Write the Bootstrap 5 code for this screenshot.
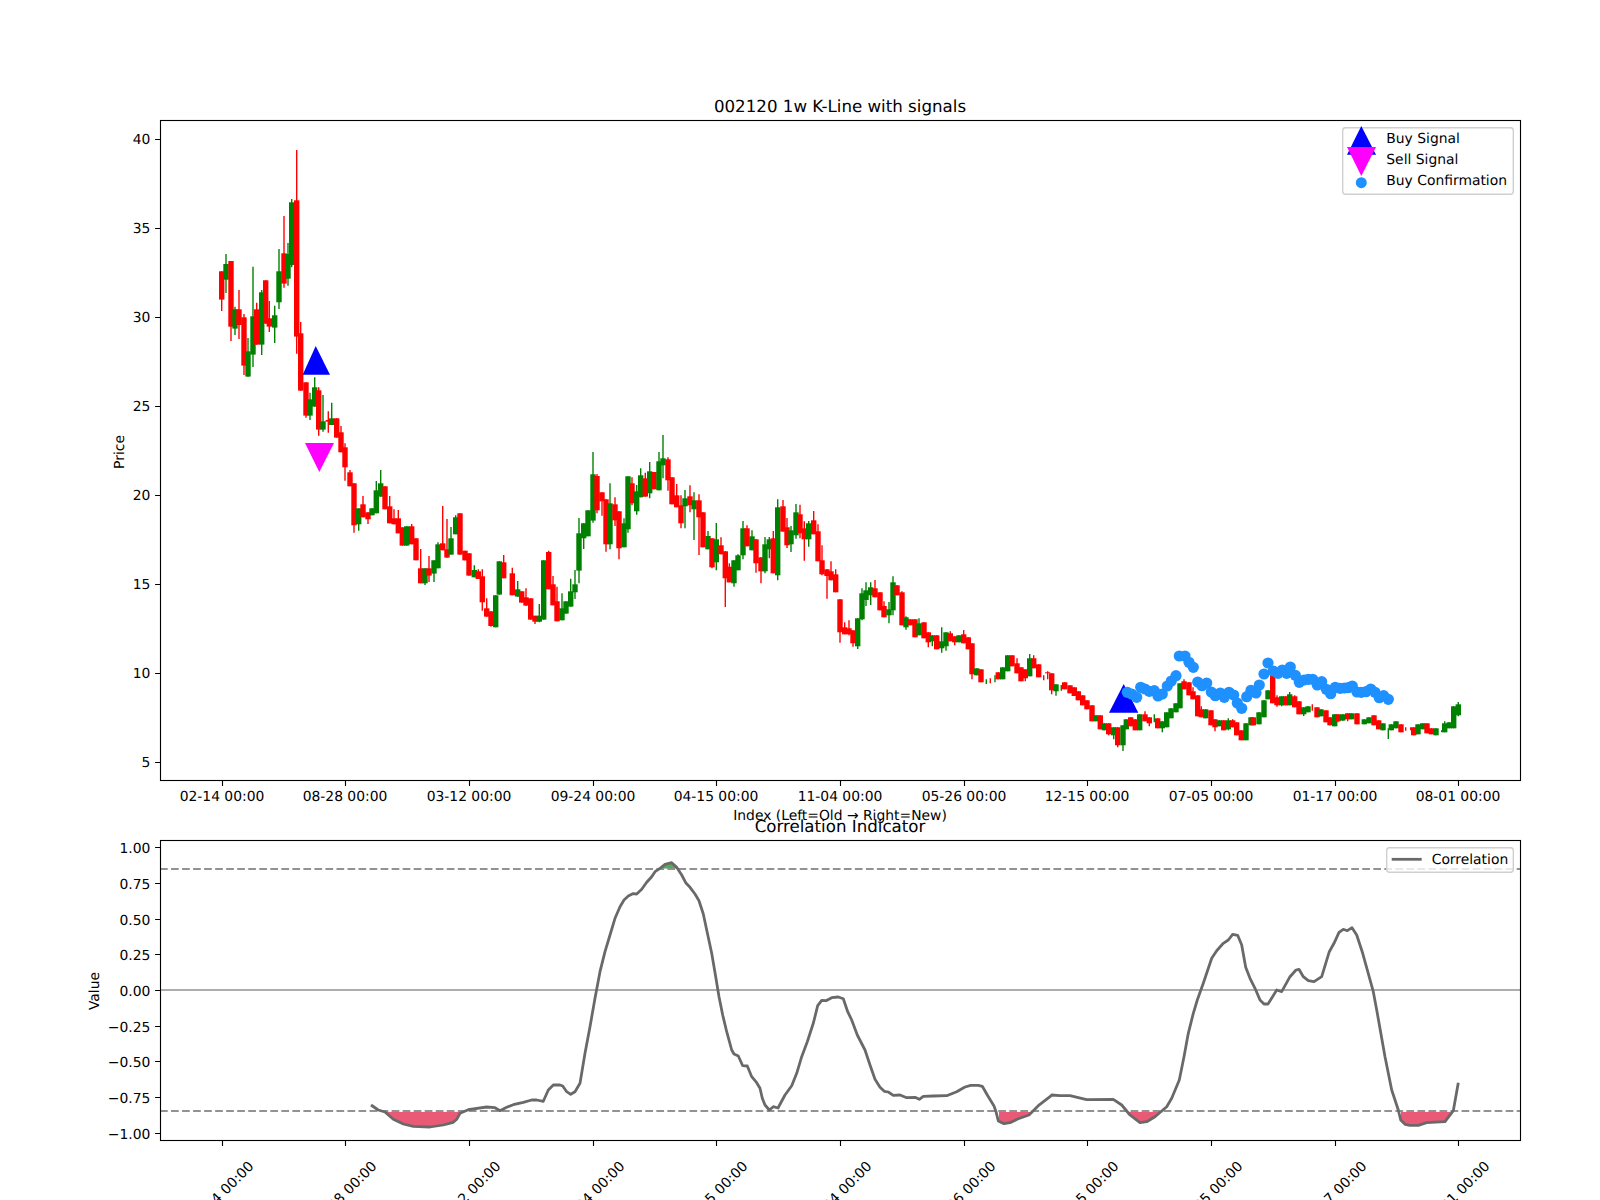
<!DOCTYPE html>
<html lang="en">
<head>
<meta charset="utf-8">
<title>002120 1w K-Line with signals</title>
<link href="https://cdn.jsdelivr.net/npm/bootstrap@5.3.0/dist/css/bootstrap.min.css" rel="stylesheet">
<style>
body { background: #fff; }
.chart-canvas { width: 1600px; height: 1200px; }
.chart-canvas text { font-family: "DejaVu Sans", sans-serif; font-size: 13.89px; fill: #000; text-rendering: geometricPrecision; }
.chart-canvas text.fig-title { font-size: 16.67px; text-anchor: middle; }
.chart-canvas text.tick-x, .chart-canvas text.axis-x { text-anchor: middle; }
.chart-canvas text.tick-y { text-anchor: end; }
.chart-canvas text.axis-y { text-anchor: middle; }
.spine { fill: none; stroke: #000; stroke-width: 1.11px; }
.ticks { fill: none; stroke: #000; stroke-width: 1.11px; }
.level-dash { stroke: #929292; stroke-width: 2.08px; stroke-dasharray: 7.7 3.33; }
.level-zero { stroke: #adadad; stroke-width: 2.08px; }
.corr-line { fill: none; stroke: #696969; stroke-width: 2.78px; stroke-linejoin: round; stroke-linecap: butt; }
.legend-box { fill: #fff; fill-opacity: .8; stroke: #d0d0d0; stroke-width: 1.39px; }
.fill-low { fill: #e85a76; }
.fill-high { fill: #4caf50; }
.mark-up { fill: #00f; }
.mark-down { fill: #f0f; }
.mark-dot { fill: #1e90ff; }
</style>
</head>
<body class="m-0">
<main class="d-flex justify-content-start p-0">
<figure class="m-0">
<svg class="chart-canvas d-block" width="1600" height="1200" viewBox="0 0 1600 1200" xmlns="http://www.w3.org/2000/svg">
  <defs>
    <clipPath id="clipLow">
      <rect x="385" y="1111.8" width="76.7" height="28"/>
      <rect x="999" y="1111.8" width="31" height="28"/>
      <rect x="1128.3" y="1111.8" width="31.7" height="28"/>
      <rect x="1401" y="1111.8" width="49" height="28"/>
    </clipPath>
    <clipPath id="clipHigh"><rect x="663" y="840" width="16" height="28.8"/></clipPath>
  </defs>

  <!-- price panel -->
  <g id="candles"></g>
  <polygon class="mark-up" points="315.7,346 302.7,374.7 330,374.7"/>
  <polygon class="mark-down" points="305,443 334,443 319.3,472"/>
  <polygon class="mark-up" points="1123.7,684 1109,712.7 1138.3,712.7"/>
  <g id="dots"></g>
  <rect class="spine" x="160.5" y="120.5" width="1360" height="660"/>
  <path class="ticks" d="M160 139.5h-4.9M160 228.5h-4.9M160 317.5h-4.9M160 406.5h-4.9M160 495.5h-4.9M160 584.5h-4.9M160 673.5h-4.9M160 762.5h-4.9M222.5 781v4.9M345.5 781v4.9M469.5 781v4.9M593.5 781v4.9M716.5 781v4.9M840.5 781v4.9M964.5 781v4.9M1087.5 781v4.9M1211.5 781v4.9M1335.5 781v4.9M1458.5 781v4.9"/>
  <text class="tick-y" x="150.3" y="144">40</text>
  <text class="tick-y" x="150.3" y="233">35</text>
  <text class="tick-y" x="150.3" y="322">30</text>
  <text class="tick-y" x="150.3" y="411">25</text>
  <text class="tick-y" x="150.3" y="500">20</text>
  <text class="tick-y" x="150.3" y="589">15</text>
  <text class="tick-y" x="150.3" y="678">10</text>
  <text class="tick-y" x="150.3" y="767">5</text>
  <text class="tick-x" x="222" y="801">02-14 00:00</text>
  <text class="tick-x" x="345" y="801">08-28 00:00</text>
  <text class="tick-x" x="469" y="801">03-12 00:00</text>
  <text class="tick-x" x="593" y="801">09-24 00:00</text>
  <text class="tick-x" x="716" y="801">04-15 00:00</text>
  <text class="tick-x" x="840" y="801">11-04 00:00</text>
  <text class="tick-x" x="964" y="801">05-26 00:00</text>
  <text class="tick-x" x="1087" y="801">12-15 00:00</text>
  <text class="tick-x" x="1211" y="801">07-05 00:00</text>
  <text class="tick-x" x="1335" y="801">01-17 00:00</text>
  <text class="tick-x" x="1458" y="801">08-01 00:00</text>
  <text class="axis-x" x="840" y="820">Index (Left=Old → Right=New)</text>
  <text class="axis-y" transform="translate(124 452) rotate(-90)">Price</text>
  <text class="fig-title" x="840" y="112">002120 1w K-Line with signals</text>

  <rect class="legend-box" x="1342.7" y="127.7" width="170.6" height="66.6" rx="2.8"/>
  <polygon class="mark-up" points="1361.3,126 1347,154.7 1376,154.7"/>
  <polygon class="mark-down" points="1347,147 1376,147 1361.3,176"/>
  <circle class="mark-dot" cx="1361.3" cy="182.7" r="5.5"/>
  <text x="1386.3" y="143">Buy Signal</text>
  <text x="1386.3" y="164">Sell Signal</text>
  <text x="1386.3" y="185">Buy Confirmation</text>

  <!-- correlation panel -->
  <path id="fillLow" class="fill-low" clip-path="url(#clipLow)"/>
  <path id="fillHigh" class="fill-high" clip-path="url(#clipHigh)"/>
  <line class="level-dash" x1="160" x2="1520" y1="869" y2="869"/>
  <line class="level-dash" x1="160" x2="1520" y1="1111" y2="1111"/>
  <line class="level-zero" x1="160" x2="1520" y1="990" y2="990"/>
  <path id="corr" class="corr-line"/>
  <rect class="spine" x="160.5" y="840.5" width="1360" height="300"/>
  <path class="ticks" d="M160 847.5h-4.9M160 883.5h-4.9M160 919.5h-4.9M160 954.5h-4.9M160 990.5h-4.9M160 1026.5h-4.9M160 1061.5h-4.9M160 1097.5h-4.9M160 1133.5h-4.9M222.5 1141v4.9M345.5 1141v4.9M469.5 1141v4.9M593.5 1141v4.9M716.5 1141v4.9M840.5 1141v4.9M964.5 1141v4.9M1087.5 1141v4.9M1211.5 1141v4.9M1335.5 1141v4.9M1458.5 1141v4.9"/>
  <text class="tick-y" x="150.3" y="853">1.00</text>
  <text class="tick-y" x="150.3" y="888.5">0.75</text>
  <text class="tick-y" x="150.3" y="924.5">0.50</text>
  <text class="tick-y" x="150.3" y="960">0.25</text>
  <text class="tick-y" x="150.3" y="996">0.00</text>
  <text class="tick-y" x="150.3" y="1031.5">−0.25</text>
  <text class="tick-y" x="150.3" y="1067">−0.50</text>
  <text class="tick-y" x="150.3" y="1103">−0.75</text>
  <text class="tick-y" x="150.3" y="1138.5">−1.00</text>
  <text class="axis-y" transform="translate(98.5 991) rotate(-90)">Value</text>
  <text class="fig-title" x="840" y="832">Correlation Indicator</text>
  <g class="tick-rot">
  <text class="tick-x" transform="translate(224.5 1197) rotate(-45)">02-14 00:00</text>
  <text class="tick-x" transform="translate(347.5 1197) rotate(-45)">08-28 00:00</text>
  <text class="tick-x" transform="translate(471.5 1197) rotate(-45)">03-12 00:00</text>
  <text class="tick-x" transform="translate(595.5 1197) rotate(-45)">09-24 00:00</text>
  <text class="tick-x" transform="translate(718.5 1197) rotate(-45)">04-15 00:00</text>
  <text class="tick-x" transform="translate(842.5 1197) rotate(-45)">11-04 00:00</text>
  <text class="tick-x" transform="translate(966.5 1197) rotate(-45)">05-26 00:00</text>
  <text class="tick-x" transform="translate(1089.5 1197) rotate(-45)">12-15 00:00</text>
  <text class="tick-x" transform="translate(1213.5 1197) rotate(-45)">07-05 00:00</text>
  <text class="tick-x" transform="translate(1337.5 1197) rotate(-45)">01-17 00:00</text>
  <text class="tick-x" transform="translate(1460.5 1197) rotate(-45)">08-01 00:00</text>
  </g>
  <rect class="legend-box" x="1386.7" y="847.7" width="126.6" height="24.6" rx="2.8"/>
  <line class="corr-line" x1="1391.7" x2="1421.7" y1="859.3" y2="859.3"/>
  <text x="1431.7" y="864">Correlation</text>
</svg>
</figure>
</main>
<script src="https://cdn.jsdelivr.net/npm/bootstrap@5.3.0/dist/js/bootstrap.bundle.min.js"></script>
<script>
const segments = [
[150,110,`215 r 484 569 484 603;228 g 462 509 432 549;243 r 453 650 453 693;255 g 598 656 590 675;267 r 598 645 540 687;282 r 622 767 612 795;294 g 724 800 684 800;309 g 619 734 470 771;320 r 598 704 578 704;335 g 547 704 540 735;347 r 511 641 511 641;358 r 625 650 573 666;374 g 616 653 587 699;387 g 484 577 417 597;402 r 430 521 318 533;414 g 432 506 399 527;425 g 277 465 267 472;440 r 271 680 120 731;452 r 670 842 636 842`],
[200,370,`318 r 37 137 37 143;330 g 88 137 68 150;344 g 52 110 22 110;356 r 61 179 52 197;369 g 154 179 75 185;385 r 150 155 124 188;395 g 145 165 98 165;410 r 145 203 145 203;423 r 187 247 168 247;435 r 232 292 220 332;450 r 307 349 300 349;462 r 340 466 340 488;476 g 415 463 415 482;489 r 403 442 378 442;504 r 427 448 427 462;516 g 415 436 415 436;529 g 361 430 333 430;542 g 340 380 300 380;555 r 349 418 349 418;569 r 409 460 378 460;582 r 445 463 418 463;595 r 445 490 420 490;607 r 472 527 472 527;620 g 469 527 469 527;635 r 469 523 462 523;648 r 505 571 505 571;662 r 595 640 537 640;675 g 595 640 595 645;687 r 595 617 558 636;702 g 571 611 571 636;714 g 523 595 517 595;728 r 520 541 408 541;741 r 538 563 447 563;753 g 505 554 471 554;767 g 442 493 436 493;780 r 430 554 430 554;795 r 542 571 542 571;807 r 550 617 550 617;823 g 600 622 586 622;835 r 604 627 598 627;847 r 619 697 598 722;860 r 715 740 685 740;873 r 724 768 724 770;887 g 676 772 676 772;898 g 574 674 574 674`],
[480,400,`71 r 487 535 465 535;97 r 520 586 503 586;113 g 568 590 543 590;125 r 574 608 574 608;138 r 592 617 565 617;152 r 595 659 595 659;165 r 647 665 647 672;178 g 647 665 612 667;191 g 481 659 481 659;206 r 456 568 452 568;219 r 553 616 528 616;231 r 604 664 560 664;246 g 625 661 580 661;258 g 604 641 604 641;272 g 574 620 536 620;285 g 553 577 510 597;297 g 400 512 354 550;311 g 370 415 370 447;324 g 331 409 331 409;339 g 223 362 156 368;351 r 228 331 222 340;366 r 277 304 277 347;378 r 298 433 298 455;390 g 310 433 250 448;405 r 313 361 292 378;417 r 334 445 334 478;432 g 370 442 355 442;444 g 229 388 229 398;456 r 250 310 232 316;470 g 274 334 255 344;482 g 226 292 205 292;496 r 235 290 218 290;509 g 214 280 186 295;522 r 216 268 216 268;537 g 184 271 156 271;549 g 175 196 105 235;564 r 178 241 172 272;576 r 232 313 232 313;590 r 286 322 252 322;603 r 316 370 286 385;615 g 295 319 270 385;630 r 289 316 256 337;642 g 301 328 277 420;657 r 301 352 283 465;669 r 337 442 337 442;684 g 408 448 393 448;696 r 415 502 415 505;709 g 418 487 369 511;723 r 436 463 412 463;736 r 454 535 454 621;748 r 500 547 490 547;762 g 481 550 481 560;774 g 466 511 463 511;789 g 385 466 363 478;801 r 385 439 376 439;816 g 409 451 391 451;828 r 418 490 418 518;843 r 472 514 472 550;855 g 433 514 411 520;868 g 418 448 411 475;880 r 415 520 393 520;893 g 322 526 298 541`],
[760,470,`69 r 109 185 90 185;81 r 172 226 144 234;93 g 181 223 168 246;108 g 127 196 102 206;120 r 133 190 104 205;133 r 175 208 154 272;146 g 160 208 153 230;161 r 151 193 123 193;174 r 184 274 163 274;186 r 271 313 226 316;201 r 298 318 298 386;213 r 304 331 274 331;227 r 313 367 298 367;240 r 388 487 388 518;254 r 472 493 457 493;267 r 475 493 451 496;279 r 481 520 481 530;293 g 445 529 445 537;306 g 370 448 355 451;318 g 361 390 337 408;332 g 352 376 337 405;345 r 355 382 330 382;360 r 367 421 367 421;372 r 408 442 394 442;387 g 418 436 396 460;399 g 337 421 319 436;411 r 346 376 346 376;426 r 367 466 364 466;438 g 442 472 439 479;451 r 448 466 448 466;465 r 448 502 448 502;477 g 460 496 445 496;492 r 457 505 457 505;505 r 487 517 487 532;517 g 496 514 496 529;530 r 496 538 496 538;545 g 514 535 472 548;558 g 487 529 487 542;571 r 490 514 484 514;584 r 499 517 499 526;597 g 496 517 496 517;611 r 493 520 480 520;625 r 502 538 502 538;636 r 520 613 520 628;650 g 595 616 595 616;663 r 598 637 598 637;679 g 637 637 628 642;691 r 637 637 625 640;705 g 637 637 616 637;715 r 607 628 607 628;728 g 592 628 592 628;743 g 556 604 556 604;756 r 556 589 556 589;771 r 580 610 565 610;783 r 592 634 592 634;796 r 598 625 598 634;809 g 565 619 552 619;821 r 565 595 556 595;836 r 583 622 583 622;851 r 625 625 616 631;863 r 607 610 604 628;875 r 610 661 610 673;888 g 643 664 643 677`],
[1040,620,`64 g 212 212 195 212;74 r 187 208 187 208;90 r 196 220 196 220;103 r 202 228 202 228;115 r 214 241 214 241;128 r 226 256 226 256;141 r 241 268 241 268;156 r 256 304 256 304;168 g 286 304 286 304;181 r 286 328 286 328;193 g 310 331 310 331;206 r 310 343 310 346;221 g 322 346 322 358;233 r 322 376 322 382;249 g 316 376 316 393;259 g 298 328 298 328;272 r 292 319 292 319;286 r 298 331 298 331;299 g 283 331 283 331;315 r 283 304 274 304;328 r 292 310 292 319;343 g 307 307 283 307;353 r 295 325 295 325;367 g 304 325 304 337;380 g 277 322 277 322;393 g 265 295 265 295;408 g 250 277 250 277;420 g 190 265 190 265;432 r 184 208 178 208;447 r 187 226 187 226;459 r 214 238 202 238;473 r 226 289 226 289;484 r 268 292 259 292;497 g 268 295 268 295;513 r 271 316 271 316;525 r 298 322 298 334;538 g 301 319 301 319;551 r 301 331 301 331;565 g 301 328 295 331;578 r 301 322 298 322;590 r 307 346 307 346;604 r 331 361 331 361;618 g 310 361 310 361;633 g 292 316 292 316;640 r 292 316 292 316;657 g 277 313 277 313;672 g 241 292 241 292;684 g 211 238 211 238;698 r 163 250 163 250`],
[1260,620,`51 r 232 256 226 260;65 g 229 256 229 259;77 r 229 256 229 256;89 g 223 256 216 256;104 r 229 262 226 262;117 r 244 283 244 283;131 g 262 283 262 288;144 g 259 277 259 277;157 r 272 272 253 272;171 r 262 292 262 292;183 g 268 289 268 289;198 r 271 307 271 307;210 r 292 316 292 316;224 g 283 319 283 319;234 r 283 304 283 307;248 g 283 302 283 302;263 r 280 298 280 304;275 g 280 298 280 298;291 r 280 313 280 313;313 g 298 313 298 313;327 g 292 310 292 310;342 r 286 316 286 316;356 r 301 328 301 328;369 g 310 331 310 331;385 g 357 357 325 357;394 g 313 331 313 331;408 g 304 325 304 325;423 r 313 337 313 337;437 r 332 332 322 332;452 r 331 331 322 331;461 r 322 346 322 346;474 g 313 343 313 343;488 g 310 328 310 328;501 r 310 340 310 340;514 r 325 343 325 343;528 g 325 346 325 346;545 g 337 337 331 337;554 g 310 337 304 337;568 g 307 325 307 325;581 g 259 325 259 325;595 g 253 286 246 289`]
];
let candleHtml = '';
for (const [ox, oy, data] of segments) {
  for (const entry of data.split(';')) {
    const [xz, c, t, b, wt, wb] = entry.split(' ');
    const x = ox + xz / 3, col = c === 'r' ? '#f00' : '#008000';
    const Y = v => (oy + v / 3).toFixed(1);
    candleHtml += `<line x1="${x.toFixed(1)}" x2="${x.toFixed(1)}" y1="${Y(+wt)}" y2="${Y(+wb)}" stroke="${col}" stroke-width="1.39"/>`;
    if (+b > +t) candleHtml += `<rect x="${(x - 2.7).toFixed(1)}" y="${Y(+t)}" width="5.4" height="${((b - t) / 3).toFixed(1)}" fill="${col}"/>`;
  }
}
document.getElementById('candles').innerHTML = candleHtml;

const dotSets = [
[1040,620,[262,217,275,222,290,232,302,202,315,207,328,214,343,212,354,228,367,222,382,198,394,183,408,167,418,108,435,108,447,127,460,142,473,186,486,197,500,189,514,216,526,227,541,219,553,232,567,217,581,225,592,249,605,265,620,230,633,211,648,219,658,195,672,162,684,129]],
[1260,620,[40,153,54,160,67,150,80,160,91,141,106,166,118,187,132,180,145,178,158,178,172,195,185,185,199,208,212,221,226,202,240,205,253,204,265,203,277,198,291,216,304,217,318,215,332,207,345,217,358,233,371,227,385,238]]
];
let dotHtml = '';
for (const [ox, oy, p] of dotSets) {
  for (let i = 0; i < p.length; i += 2) {
    dotHtml += `<circle class="mark-dot" cx="${(ox + p[i] / 3).toFixed(1)}" cy="${(oy + p[i + 1] / 3).toFixed(1)}" r="5.6"/>`;
  }
}
document.getElementById('dots').innerHTML = dotHtml;

const lineSets = [
[60,760,[933,1035,955,1050,975,1056,1000,1078,1030,1092,1060,1099,1110,1101,1150,1095,1180,1087,1190,1078,1200,1060,1225,1049,1280,1041,1305,1043,1320,1052,1340,1042,1360,1034,1390,1027,1415,1020,1430,1020,1450,1024,1465,990,1480,975]],
[550,840,[30,735,38,738,50,755,62,763,75,755,90,730,105,640,120,560,135,475,150,395,165,335,180,285,195,235,210,200,222,180,235,168,248,161,260,162,275,148,290,127,305,110,315,95,330,85,345,73,365,68,380,82,395,105,407,128,420,142,435,162,447,182,460,222,470,270,485,340,497,410,507,470,518,525,530,575,545,630,552,642,565,648,578,677,592,678,605,710,620,728,630,745,637,775,645,795,658,810,670,800,684,804,705,765,725,737,740,700,755,650,772,605,790,550,803,497,815,481,828,482,845,473,865,471,880,476,893,515,905,540,922,585,945,630,960,675,975,718,990,742,1003,754,1015,756,1030,766,1050,765,1070,773,1095,772,1108,778,1120,769,1150,768,1190,767,1220,755,1245,741,1262,736,1285,736,1297,739,1312,765,1332,798,1338,815,1345,843,1362,851,1380,848,1405,836,1437,825,1465,797,1500,770]],
[1040,830,[35,795,60,797,90,797,140,809,220,808,245,825,270,855,300,878,320,875,345,860,380,830,395,805,418,750,432,680,445,610,460,550,472,510,490,460,515,385,530,362,550,340,565,330,578,313,593,316,605,345,617,412,630,445,645,475,660,510,672,522,684,522,710,480,725,485,750,440,768,420,777,418,790,440,805,452,822,455,845,440,868,365,882,340,897,307,910,298,922,302,936,293,950,315,968,370,1000,485,1012,550,1035,680,1055,780,1075,840,1082,870,1095,883,1110,886,1135,886,1160,878,1215,875,1240,842,1255,758]]
];
const pts = [];
for (const [ox, oy, p] of lineSets) {
  for (let i = 0; i < p.length; i += 2) pts.push([(ox + p[i] / 3).toFixed(1), (oy + p[i + 1] / 3).toFixed(1)]);
}
const linePath = pts.map((q, i) => (i ? 'L' : 'M') + q[0] + ' ' + q[1]).join('');
document.getElementById('corr').setAttribute('d', linePath);
const closeAt = y => `${linePath}L${pts[pts.length - 1][0]} ${y}L${pts[0][0]} ${y}Z`;
document.getElementById('fillLow').setAttribute('d', closeAt(1111.8));
document.getElementById('fillHigh').setAttribute('d', closeAt(868.7));
</script>
</body>
</html>
